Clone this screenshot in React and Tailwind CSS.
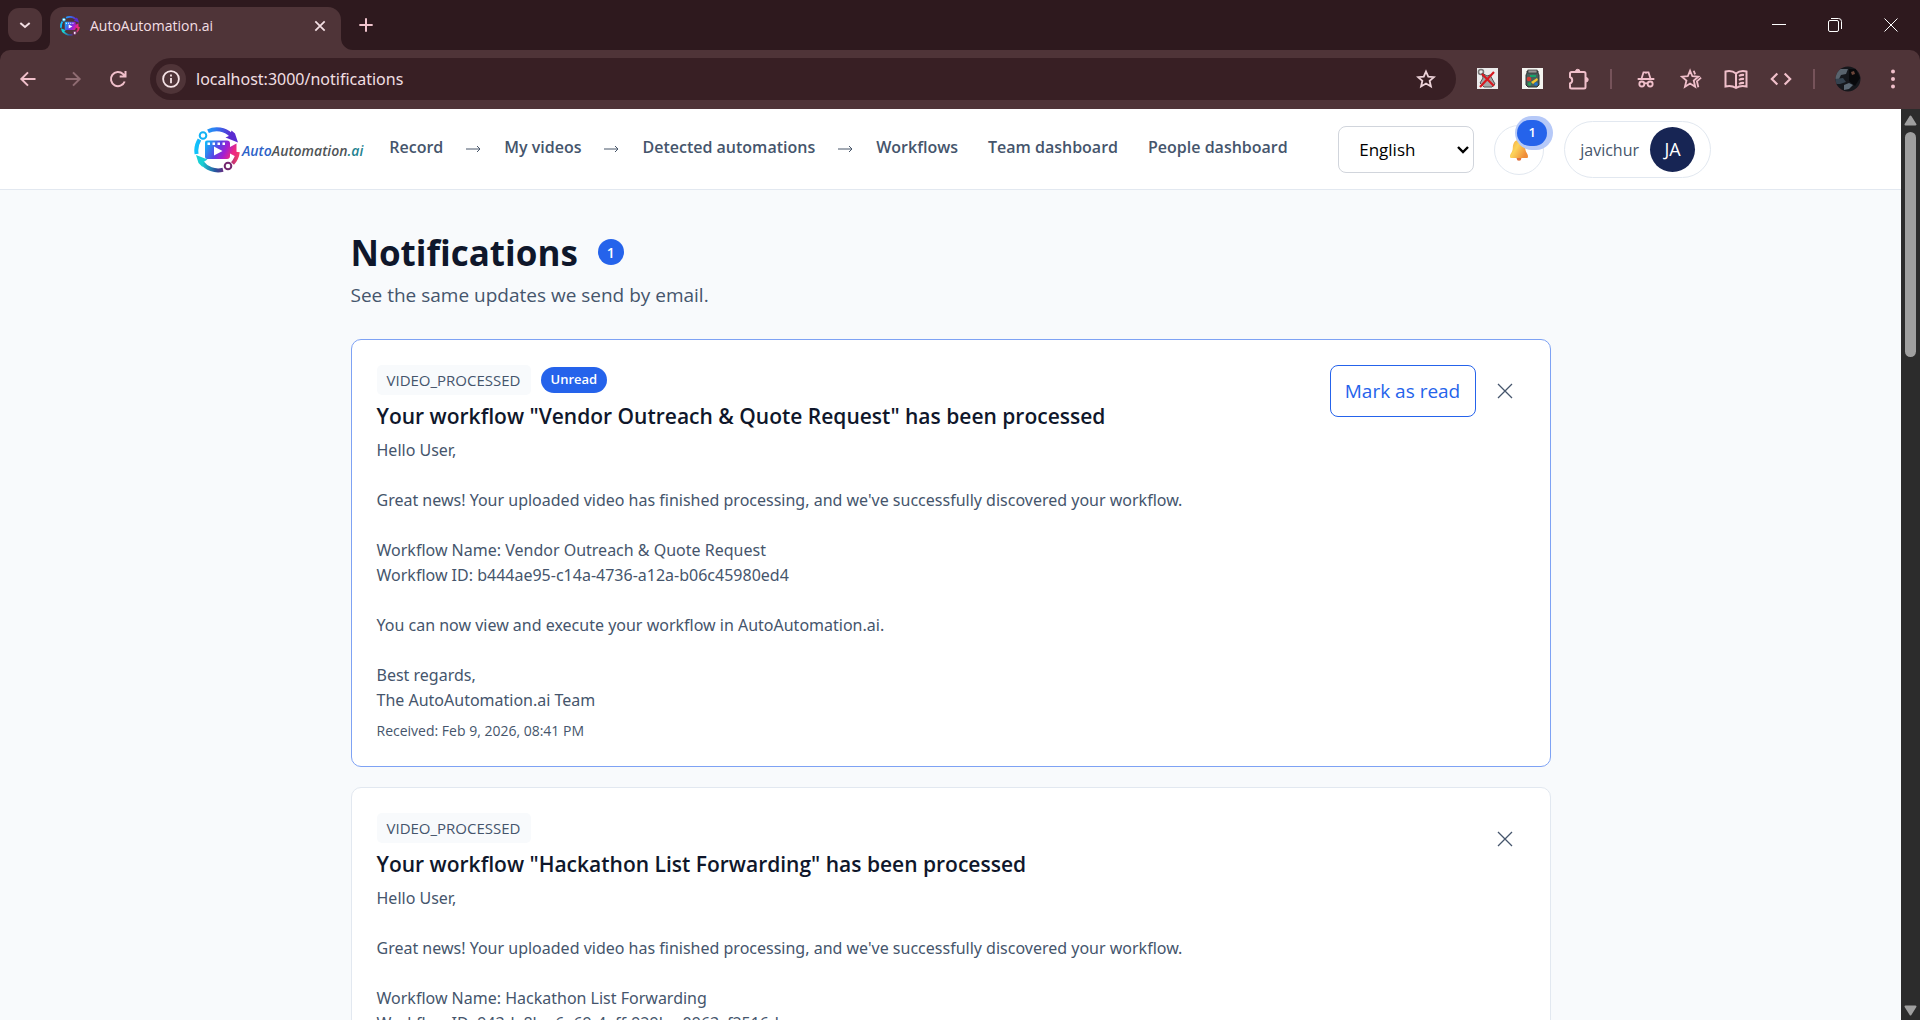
import React from "react";

const Ico = ({ size = 20, children, className = "", sw = 2, box = 24 }) => (
  <svg width={size} height={size} viewBox={`0 0 ${box} ${box}`} fill="none" stroke="currentColor" strokeWidth={sw} className={`shrink-0 ${className}`} aria-hidden="true">
    {children}
  </svg>
);

function LogoMark({ size, id }) {
  return (
    <svg width={size} height={size} viewBox="0 0 46 46" className="shrink-0" aria-hidden="true">
      <defs>
        <linearGradient id={`${id}t`} x1="0" y1="0" x2="1" y2="0">
          <stop offset="0" stopColor="#10c3fb" />
          <stop offset="0.55" stopColor="#2f7df2" />
          <stop offset="1" stopColor="#5a2bd0" />
        </linearGradient>
        <linearGradient id={`${id}b`} x1="0" y1="0" x2="1" y2="0">
          <stop offset="0" stopColor="#19d3d6" />
          <stop offset="0.4" stopColor="#2a4f9b" />
          <stop offset="0.65" stopColor="#74277f" />
          <stop offset="1" stopColor="#f23a6c" />
        </linearGradient>
        <linearGradient id={`${id}c`} x1="0" y1="0" x2="1" y2="0.3">
          <stop offset="0" stopColor="#08c4fa" />
          <stop offset="0.5" stopColor="#5b3fe4" />
          <stop offset="0.75" stopColor="#a51fd0" />
          <stop offset="1" stopColor="#ee2a80" />
        </linearGradient>
      </defs>
      <path d="M2.6 27A20.6 20.6 0 0 1 5.5 12.5M14 4.2A20.6 20.6 0 0 1 37 8" fill="none" stroke={`url(#${id}t)`} strokeWidth="4" />
      <path d="M44 15.500L31.500 10.500L36 8.500L37.500 3.500L41 6.500Z" fill="#5a2bd0" />
      <circle cx="9" cy="8.500" r="3.300" fill="#fff" stroke="#12b2f5" strokeWidth="2" />
      <path d="M7.500 35A20.6 20.6 0 0 0 29 42.800M38.500 36.500A20.6 20.6 0 0 0 43.800 25" fill="none" stroke={`url(#${id}b)`} strokeWidth="4" />
      <path d="M2 28L13.500 32.500L9.500 35L8.500 40L4.500 36Z" fill="#19cfd4" />
      <circle cx="34" cy="39" r="3.300" fill="#fff" stroke="#74276f" strokeWidth="2" />
      <path d="M13 13.500H33a3 3 0 0 1 3 3V20l6.500-3.500V30L36 26.500V29a3 3 0 0 1-3 3H13a2 2 0 0 1-2-2V15.500a2 2 0 0 1 2-2Z" fill={`url(#${id}c)`} />
      <path d="M13.500 15.500h2.500v2.500h-2.500zM18.500 15.500h2.500v2.500h-2.500zM23.500 15.500h2.500v2.500h-2.500zM28.500 15.500h2.500v2.500h-2.500z" fill="#fff" />
      <path d="M20 19.500L28.500 24L20 28.500Z" fill="#fff" />
    </svg>
  );
}

function TabStrip() {
  return (
    <div className="flex h-[50px] shrink-0 items-start bg-[#2e191e] pr-px pl-2 text-[#f3dfe3]">
      <button aria-label="Search tabs" className="mt-2 grid size-[34px] place-items-center rounded-[11px] bg-[#4f3438]">
        <Ico size={16} sw={3}><path d="M5 9l7 6 7-6" /></Ico>
      </button>
      <div className="mt-[7px] flex h-[43px] items-stretch">
        <div className="w-2 self-end">
          <svg width="8" height="8" viewBox="0 0 8 8" aria-hidden="true"><path d="M8 0v8H0a8 8 0 0 0 8-8Z" fill="#4f3438" /></svg>
        </div>
        <div className="flex w-[291px] items-center rounded-t-[13px] bg-[#4f3438] pr-[14px] pb-[6px] pl-[10px]">
          <LogoMark size={20} id="fav" />
          <span className="ml-[10px] flex-1 text-[14px]">AutoAutomation.ai</span>
          <button aria-label="Close tab"><Ico size={14} sw={3}><path d="M4 4l16 16M20 4L4 20" /></Ico></button>
        </div>
        <div className="w-3 self-end">
          <svg width="12" height="12" viewBox="0 0 12 12" aria-hidden="true"><path d="M0 0v12h12A12 12 0 0 1 0 0Z" fill="#4f3438" /></svg>
        </div>
      </div>
      <button aria-label="New tab" className="mt-[17px] ml-[5px] text-[#f0c3cd]"><Ico size={16} sw={3}><path d="M12 2v20M2 12h20" /></Ico></button>
      <div className="ml-auto flex h-[49px] items-center text-white">
        <button aria-label="Minimize" className="grid h-full w-14 place-items-center"><Ico size={14} sw={1} box={14}><path d="M0 6.500h14" /></Ico></button>
        <button aria-label="Restore" className="grid h-full w-14 place-items-center">
          <Ico size={14} sw={1} box={14}><rect x="0.500" y="2.500" width="10" height="11" rx="1.500" /><path d="M3 .5h7.500a3 3 0 0 1 3 3V11" /></Ico>
        </button>
        <button aria-label="Close window" className="grid h-full w-14 place-items-center"><Ico size={14} sw={1} box={14}><path d="M.5.5l13 13M13.500.5l-13 13" /></Ico></button>
      </div>
    </div>
  );
}

function Toolbar() {
  return (
    <div className="shrink-0 bg-[#2e191e]">
      <div className="flex h-[59px] items-center rounded-t-[10px] bg-[#4f3438] pr-[18px] pb-[2px] pl-[18px] text-[#f0bfca]">
        <button aria-label="Back"><Ico size={20} sw={2.400}><path d="M21 12H4M12 4l-8 8 8 8" /></Ico></button>
        <button aria-label="Forward" className="ml-[25px] text-[#8f6c72]"><Ico size={20} sw={2.400}><path d="M3 12h17M12 4l8 8-8 8" /></Ico></button>
        <button aria-label="Reload" className="ml-[25px]"><Ico size={20} sw={2.400}><path d="M20 15A8.500 8.500 0 1 1 18 6L21 9M21 2.500v6.500h-7" /></Ico></button>
        <div className="ml-[22px] flex h-[42px] min-w-0 flex-1 items-center rounded-full bg-[#381f24] pr-5 pl-[6px]">
          <button aria-label="Site information" className="grid size-[30px] shrink-0 place-items-center rounded-full bg-[#4f3438] text-[#f6e3e6]">
            <Ico size={18} sw={2.400}><circle cx="12" cy="12" r="10.500" /><path d="M12 10.500v7M12 6v2.500" /></Ico>
          </button>
          <input aria-label="Address" defaultValue="localhost:3000/notifications" className="ml-[10px] h-8 min-w-0 flex-1 bg-transparent font-['Noto_Sans',sans-serif] text-[16px] text-[#f1dfe2] outline-none" />
          <button aria-label="Bookmark" className="text-[#ecd2d8]"><Ico size={20} sw={2.200}><path d="M12 3l2.700 6.200 6.800.6-5.100 4.500 1.500 6.700L12 17.500 6.100 21l1.500-6.700L2.500 9.800l6.800-.6Z" /></Ico></button>
        </div>
        <div className="ml-[21px] flex items-center">
          <button aria-label="Blocker extension">
            <svg width="21" height="21" viewBox="0 0 21 21" aria-hidden="true"><rect width="21" height="21" fill="#ebebeb" /><circle cx="4" cy="4" r="2.500" fill="none" stroke="#777" strokeWidth="1.500" /><path d="M5 5l5 3 3-1 5 9-3 3H7l-4-4 3-5Z" fill="#a5a7a8" stroke="#555" /><path d="M3 19L17 4M5 6l12 12" stroke="#d71920" strokeWidth="2.200" /></svg>
          </button>
          <button aria-label="Cookie extension" className="ml-6">
            <svg width="21" height="21" viewBox="0 0 21 21" aria-hidden="true"><rect width="21" height="21" fill="#f4f4f0" /><path d="M5 3h11v2l1 2v10l-2 2H6l-2-2V7l1-2Z" fill="#45605d" stroke="#333" /><rect x="6" y="2" width="9" height="3" fill="#999" stroke="#333" strokeWidth=".7" /><path d="M8 7h6v2H8z" fill="#17a46b" /><circle cx="7" cy="11" r="2.300" fill="#d33c34" /><path d="M9 14l6-4 1 2-5 4z" fill="#f4c52c" /><circle cx="7.500" cy="16" r="1.800" fill="#2e9e57" /><circle cx="14" cy="16" r="1.800" fill="#2772c9" /></svg>
          </button>
          <button aria-label="Extensions" className="ml-6">
            <Ico size={22} sw={2} box={22}><path d="M3 5.500A1.500 1.500 0 0 1 4.500 4H17a1.500 1.500 0 0 1 1.500 1.500V19a1.500 1.500 0 0 1-1.500 1.500H4.500A1.500 1.500 0 0 1 3 19v-3.500a3.500 3.500 0 0 0 0-6.500Z" /><path d="M8.500 3.500a2.200 2.200 0 0 1 4.400 0ZM19 9.500a2.200 2.200 0 0 1 0 4.400Z" fill="currentColor" strokeWidth="1" /></Ico>
          </button>
        </div>
        <div className="ml-[21px] h-5 w-[2px] bg-[#76535a]" />
        <div className="ml-[24px] flex items-center">
          <button aria-label="Incognito"><Ico size={20} sw={2.200}><path d="M2 12h20M6.500 12L9 4h2l1 .6L13 4h2l2.500 8" /><circle cx="7" cy="18" r="3" /><circle cx="17" cy="18" r="3" /><path d="M10 17.500q2-1 4 0" /></Ico></button>
          <button aria-label="Favorites" className="ml-[24px]"><Ico size={22} sw={2}><path d="M11 3l2.500 6 6.500.5-5 4.300 1.600 6.700L11 17l-5.600 3.500L7 13.800 2 9.500 8.500 9ZM15 3l1.500 4M23 10.500l-4.500 4L20 21" /></Ico></button>
          <button aria-label="Reading list" className="ml-[22px]"><Ico size={24} sw={2}><path d="M12 6.500C9 4 5 3.700 1.500 4.500v15c3.500-1 7.500-.5 10.500 1.500 3-2 7-2.500 10.500-1.500v-15C19 3.700 15 4 12 6.500V21M15 9q2.500-1.500 5-1M15 13q2.500-1.500 5-1M15 17q2.500-1.500 5-1" /></Ico></button>
          <button aria-label="Developer tools" className="ml-[22px]"><Ico size={22} sw={2.400}><path d="M8 6l-6 6 6 6M16 6l6 6-6 6" /></Ico></button>
        </div>
        <div className="ml-[21px] h-5 w-[2px] bg-[#76535a]" />
        <button aria-label="Profile" className="ml-[20px]">
          <svg width="26" height="26" viewBox="0 0 26 26" aria-hidden="true"><clipPath id="pf"><circle cx="13" cy="13" r="12.500" /></clipPath><g clipPath="url(#pf)"><rect width="26" height="26" fill="#15171c" /><path d="M0 3h13l-2 5-5 1-2 4H0Z" fill="#59636d" /><path d="M0 13l8-1 3 4-6 2H0Z" fill="#35424f" /><path d="M14 3h7l4 9-5 8-6-5Z" fill="#08090c" /><path d="M16 6l3-1 1 3-3 1Z" fill="#6b4539" /><path d="M9 19l5-2 4 2-4 4-5 1Z" fill="#5c6975" /></g></svg>
        </button>
        <button aria-label="Menu" className="ml-[23px]"><svg width="18" height="20" viewBox="0 0 18 20" fill="currentColor" aria-hidden="true"><circle cx="9" cy="2.500" r="2" /><circle cx="9" cy="10" r="2" /><circle cx="9" cy="17.500" r="2" /></svg></button>
      </div>
    </div>
  );
}

const Arrow = () => (
  <svg width="15" height="8" viewBox="0 0 15 8" fill="none" stroke="#475569" className="mx-[23px] mt-[5px] shrink-0" aria-hidden="true"><path d="M0 4h14M11 1l3 3-3 3" /></svg>
);

function SiteHeader() {
  return (
    <header className="border-b border-slate-200 bg-white">
      <div className="mx-auto flex h-20 max-w-[1521px] items-center pt-px pl-1">
        <a href="#home" className="flex shrink-0 items-center gap-[2px]">
          <LogoMark size={46} id="logo" />
          <span className="pt-[2px] text-[14px] font-semibold italic text-[#505456]">
            <span className="text-[#2d63c8]">Auto</span>Automation<span className="text-[#1f8390]">.ai</span>
          </span>
        </a>
        <nav className="ml-[26px] flex items-center pb-[6px] text-[16px] font-semibold whitespace-nowrap text-slate-600">
          <a href="#record">Record</a><Arrow />
          <a href="#videos">My videos</a><Arrow />
          <a href="#detected">Detected automations</a><Arrow />
          <a href="#workflows">Workflows</a>
          <a href="#team" className="ml-[30px]">Team dashboard</a>
          <a href="#people" className="ml-[30px]">People dashboard</a>
        </nav>
        <div className="ml-auto flex shrink-0 items-center gap-5">
          <div className="relative">
            <select aria-label="Language" className="h-[47px] w-[136px] appearance-none rounded-lg border border-gray-300 bg-white pl-5 text-[17px] text-black"><option>English</option></select>
            <svg width="12" height="8" viewBox="0 0 12 8" fill="none" stroke="#000" strokeWidth="2.400" className="pointer-events-none absolute top-5 right-[5px]" aria-hidden="true"><path d="M1 1l5 5 5-5" /></svg>
          </div>
          <button aria-label="Notifications, 1 unread" className="relative grid size-[50px] place-items-center rounded-full border border-slate-200">
            <svg width="20" height="22" viewBox="0 0 20 22" aria-hidden="true"><defs><linearGradient id="bell" x1="0" y1="0" x2="1" y2="0.600"><stop offset="0" stopColor="#f3a23c" /><stop offset="0.450" stopColor="#fcd35a" /><stop offset="1" stopColor="#f08c38" /></linearGradient></defs><circle cx="10" cy="19.500" r="2.300" fill="#e0703c" /><path d="M10 1C5.500 1 4 4.500 3.800 9 3.600 13.500 1 14.500 1 17.500c0 1 .5 1.500 1.500 1.500h15c1 0 1.500-.5 1.500-1.500 0-3-2.600-4-2.800-8.500C16 4.500 14.500 1 10 1Z" fill="url(#bell)" /></svg>
            <span className="absolute -top-[6px] left-[22px] flex h-[26px] w-[30px] items-center justify-center rounded-full bg-[#2563eb] text-[13px] font-semibold text-white shadow-[2px_0_0_4px_#b6c9f8]">1</span>
          </button>
          <button className="flex h-[57px] items-center gap-[11px] rounded-full border border-slate-200 pr-[15px] pl-[15px] text-[16px] text-slate-600">
            javichur
            <span className="grid size-[45px] place-items-center rounded-full bg-[#172554] text-[18px] text-white">JA</span>
          </button>
        </div>
      </div>
    </header>
  );
}

function CloseButton() {
  return (
    <button aria-label="Dismiss" className="grid h-[52px] w-10 place-items-center text-slate-600">
      <svg width="16" height="16" viewBox="0 0 16 16" fill="none" stroke="currentColor" strokeWidth="1.300" aria-hidden="true"><path d="M1 1l14 14M15 1L1 15" /></svg>
    </button>
  );
}

function Card({ name, id, unread, received }) {
  return (
    <article className={`flex items-start rounded-[10px] border bg-white p-[25px] ${unread ? "border-[#7ea2f4]" : "border-slate-200"}`}>
      <div className="min-w-0 flex-1">
        <div className="flex h-[30px] items-center gap-[10px]">
          <span className="flex h-[30px] items-center rounded-[5px] bg-slate-50 px-[10px] text-[15px] text-slate-600">VIDEO_PROCESSED</span>
          {unread && <span className="flex h-[26px] items-center rounded-full bg-[#2563eb] px-[10px] text-[13px] font-semibold text-white">Unread</span>}
        </div>
        <h2 className="mt-[6px] text-[21px] leading-[30px] font-semibold text-slate-900">Your workflow "{name}" has been processed</h2>
        <p className="mt-[7px] font-['Noto_Sans',sans-serif] text-[16px] leading-[25px] whitespace-pre-line text-slate-600">
          {`Hello User,

Great news! Your uploaded video has finished processing, and we've successfully discovered your workflow.

Workflow Name: ${name}
Workflow ID: ${id}

You can now view and execute your workflow in AutoAutomation.ai.

Best regards,
The AutoAutomation.ai Team`}
        </p>
        <p className="mt-2 text-[14px] leading-5 text-slate-600">Received: {received}</p>
      </div>
      <div className="flex items-center gap-[9px]">
        {unread && <button className="h-[52px] w-[146px] rounded-lg border border-[#2563eb] text-[19px] text-[#2563eb]">Mark as read</button>}
        <CloseButton />
      </div>
    </article>
  );
}

export default function App() {
  return (
    <div className="flex h-screen flex-col overflow-hidden font-['Open_Sans','Noto_Sans',sans-serif]">
      <TabStrip />
      <Toolbar />
      <div className="flex min-h-0 flex-1">
        <div className="min-w-0 flex-1 overflow-hidden bg-slate-50">
          <SiteHeader />
          <main className="mx-auto max-w-[1200px] pt-[38px]">
            <div className="flex items-center gap-5">
              <h1 className="text-[35px] leading-[50px] font-bold text-slate-900">Notifications</h1>
              <span className="mb-[2px] grid size-[26px] place-items-center rounded-full bg-[#2563eb] text-[14px] font-semibold text-white">1</span>
            </div>
            <p className="mt-[2px] text-[19px] leading-[30px] text-slate-600">See the same updates we send by email.</p>
            <div className="mt-[29px] flex flex-col gap-5">
              <Card unread name="Vendor Outreach & Quote Request" id="b444ae95-c14a-4736-a12a-b06c45980ed4" received="Feb 9, 2026, 08:41 PM" />
              <Card name="Hackathon List Forwarding" id="943da8bc-6e69-4aff-929b-a0963cf2516d" received="Feb 9, 2026, 08:20 PM" />
            </div>
          </main>
        </div>
        <div className="flex w-[19px] shrink-0 flex-col items-center bg-[#2c2c2c] pt-[6px] pb-1">
          <svg width="13" height="11" viewBox="0 0 13 11" aria-hidden="true"><path d="M6.500 1.500l5 8h-10Z" fill="#9f9f9f" stroke="#9f9f9f" strokeWidth="2" strokeLinejoin="round" /></svg>
          <div className="mt-[6px] h-[225px] w-[11px] rounded-full bg-[#9f9f9f]" />
          <svg width="13" height="11" viewBox="0 0 13 11" className="mt-auto" aria-hidden="true"><path d="M6.500 9.500l5-8h-10Z" fill="#9f9f9f" stroke="#9f9f9f" strokeWidth="2" strokeLinejoin="round" /></svg>
        </div>
      </div>
    </div>
  );
}
